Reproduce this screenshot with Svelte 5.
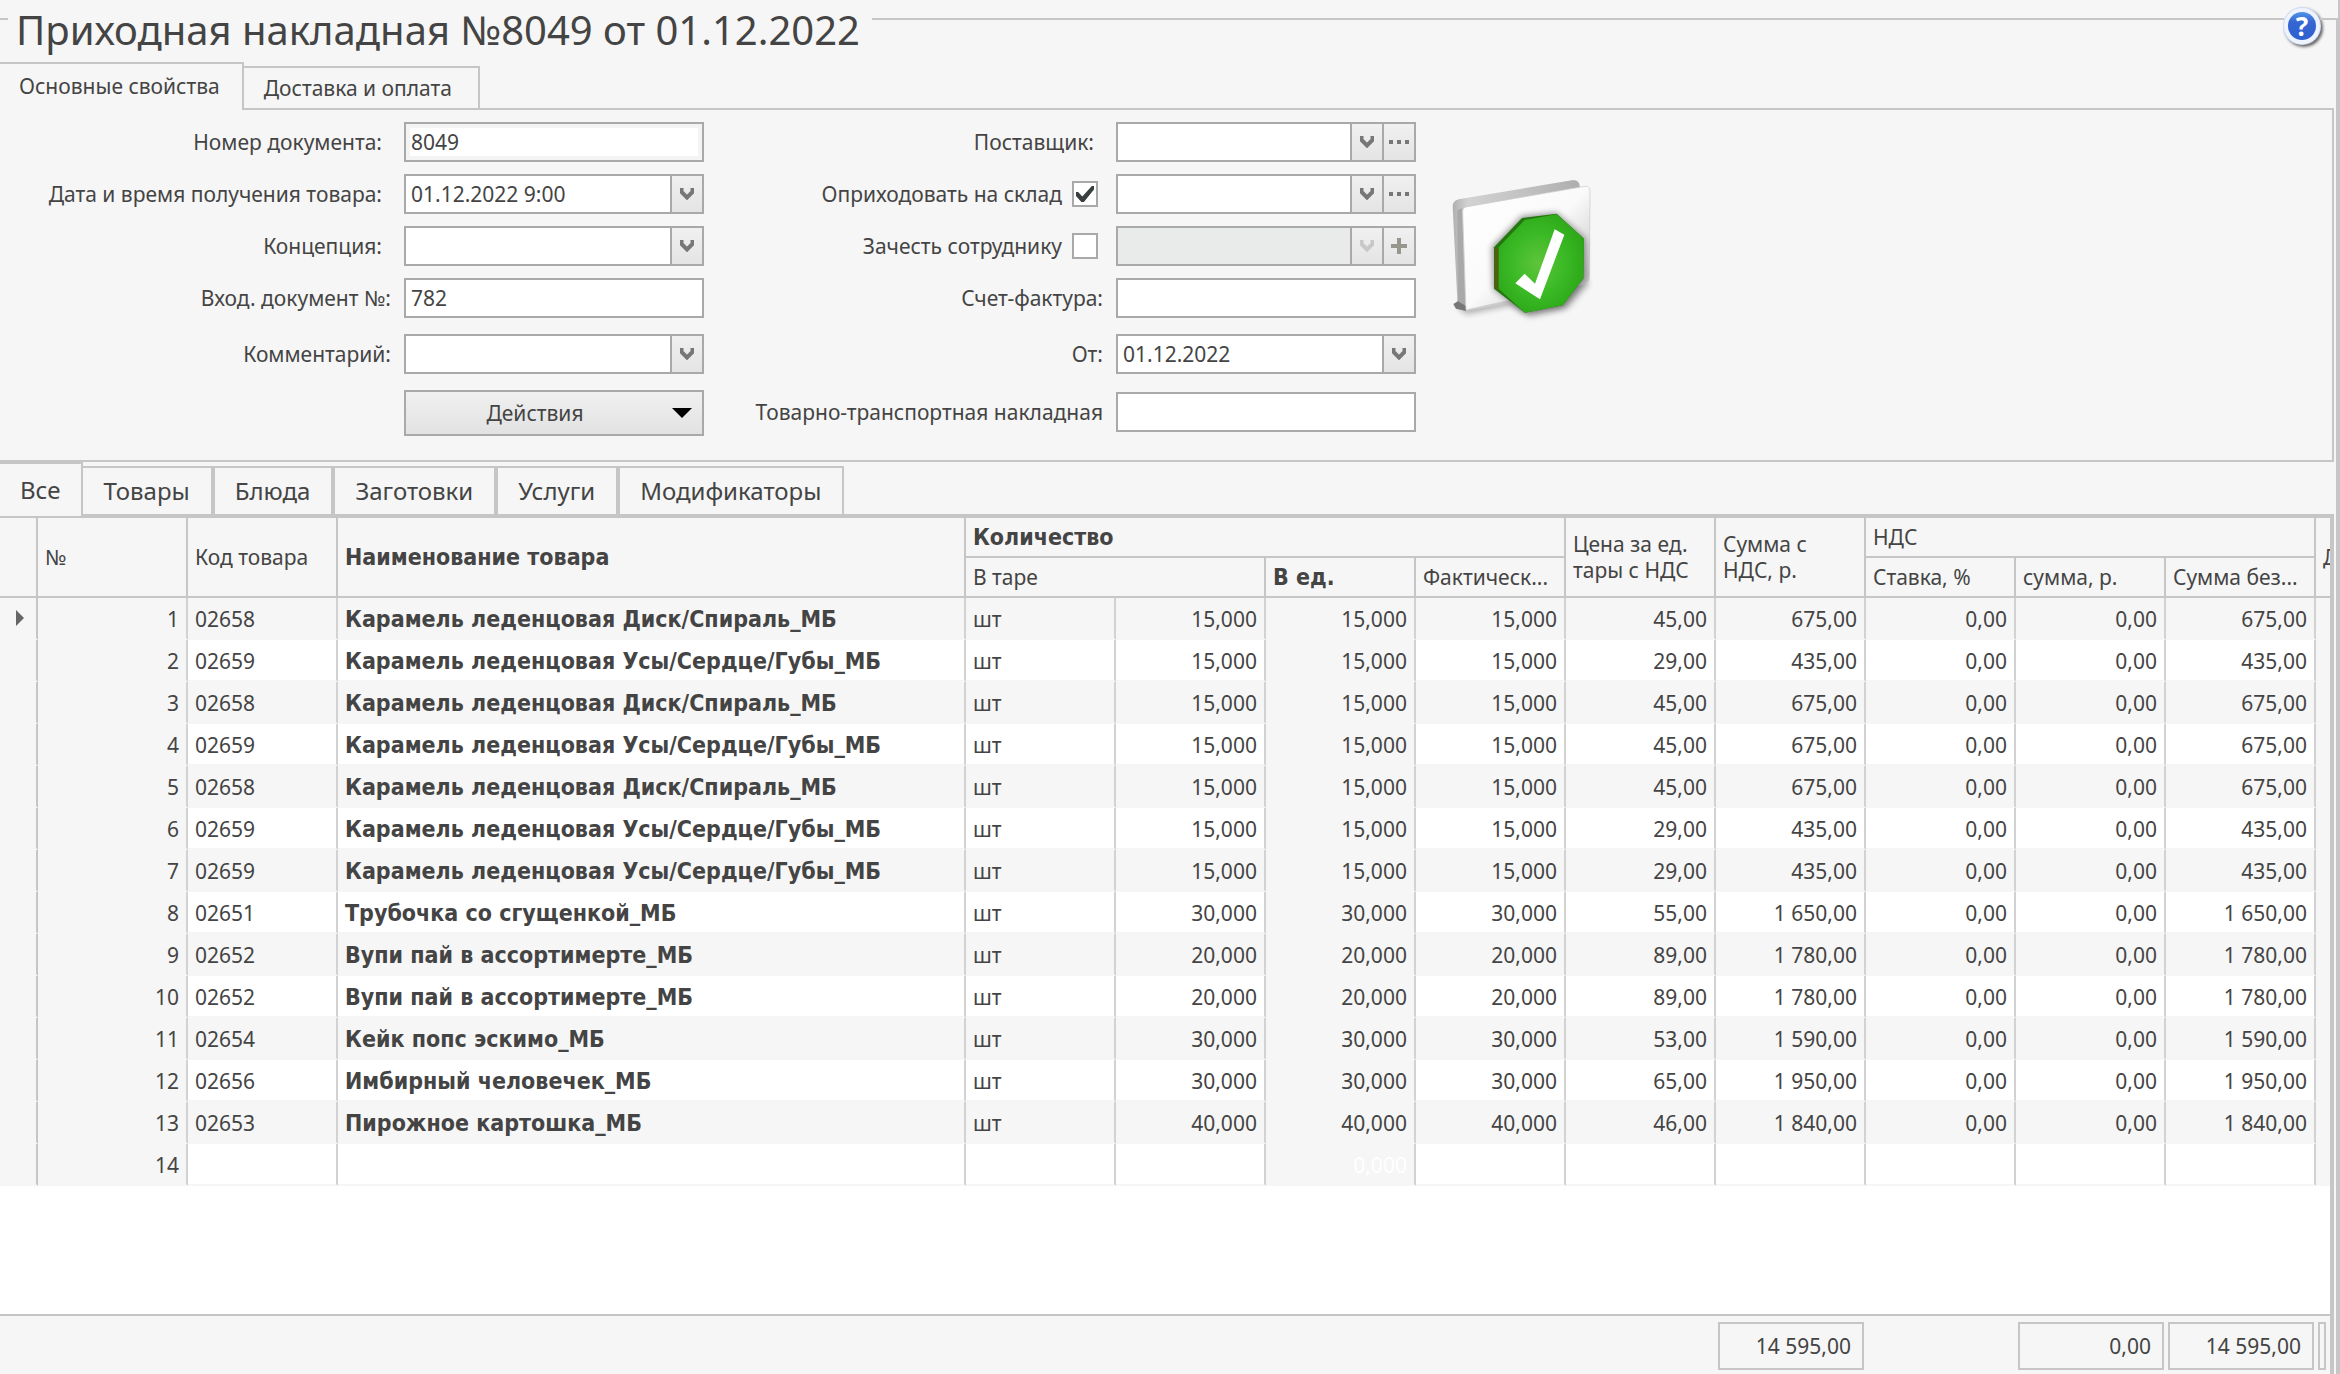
<script>
  const mainTabs = ['Основные свойства', 'Доставка и оплата'];
  const goodsTabs = ['Все', 'Товары', 'Блюда', 'Заготовки', 'Услуги', 'Модификаторы'];

  let activeMain = $state(0);
  let activeGoods = $state(0);

  const disk = 'Карамель леденцовая Диск/Спираль_МБ';
  const lips = 'Карамель леденцовая Усы/Сердце/Губы_МБ';
  const pie = 'Вупи пай в ассортимерте_МБ';

  const rows = [
    ['02658', disk, '15,000', '45,00', '675,00'],
    ['02659', lips, '15,000', '29,00', '435,00'],
    ['02658', disk, '15,000', '45,00', '675,00'],
    ['02659', lips, '15,000', '45,00', '675,00'],
    ['02658', disk, '15,000', '45,00', '675,00'],
    ['02659', lips, '15,000', '29,00', '435,00'],
    ['02659', lips, '15,000', '29,00', '435,00'],
    ['02651', 'Трубочка со сгущенкой_МБ', '30,000', '55,00', '1 650,00'],
    ['02652', pie, '20,000', '89,00', '1 780,00'],
    ['02652', pie, '20,000', '89,00', '1 780,00'],
    ['02654', 'Кейк попс эскимо_МБ', '30,000', '53,00', '1 590,00'],
    ['02656', 'Имбирный человечек_МБ', '30,000', '65,00', '1 950,00'],
    ['02653', 'Пирожное картошка_МБ', '40,000', '46,00', '1 840,00']
  ];
</script>

{#snippet chevron()}
  <svg class="glyph" viewBox="0 0 14 12" aria-hidden="true"><path d="M1.500 0v4L7 9.500l5.500-5.500V0" /></svg>
{/snippet}

{#snippet dots()}
  <svg class="dots" viewBox="0 0 20 4" aria-hidden="true"><path d="M0 0h4v4H0zM8 0h4v4H8zM16 0h4v4h-4z" /></svg>
{/snippet}

<div class="page">
  <header class="head">
    <span class="rule short"></span>
    <h1>Приходная накладная №8049 от 01.12.2022</h1>
    <span class="rule grow"></span>
    <button class="help" aria-label="Справка"><span>?</span></button>
    <span class="rule end"></span>
  </header>

  <div class="body">
    <div class="tabs main-tabs" role="tablist">
      {#each mainTabs as name, i}
        <button role="tab" aria-selected={activeMain === i} class:active={activeMain === i} onclick={() => (activeMain = i)}>{name}</button>
      {/each}
      <span class="rest"></span>
    </div>

    <form class="form">
      <div class="column left">
        <div class="row">
          <label class="inset" for="num">Номер документа:</label>
          <div class="box focused"><input id="num" value="8049" /></div>
        </div>
        <div class="row">
          <label class="inset" for="received">Дата и время получения товара:</label>
          <div class="box"><input id="received" value="01.12.2022 9:00" /><button type="button" class="side" aria-label="Календарь">{@render chevron()}</button></div>
        </div>
        <div class="row">
          <label class="inset" for="concept">Концепция:</label>
          <div class="box combo"><select id="concept"><option></option></select><span class="side">{@render chevron()}</span></div>
        </div>
        <div class="row">
          <label for="incoming">Вход. документ №:</label>
          <div class="box"><input id="incoming" value="782" /></div>
        </div>
        <div class="row spaced">
          <label for="comment">Комментарий:</label>
          <div class="box combo"><select id="comment"><option></option></select><span class="side">{@render chevron()}</span></div>
        </div>
        <div class="row spaced action-row">
          <button type="button" class="actions">
            <span>Действия</span>
            <svg viewBox="0 0 20 10" aria-hidden="true"><path d="M0 0h20L10 10z" /></svg>
          </button>
        </div>
      </div>

      <div class="column right">
        <div class="row">
          <label class="inset" for="supplier">Поставщик:</label>
          <div class="box combo"><select id="supplier"><option></option></select><span class="side">{@render chevron()}</span><button type="button" class="side" aria-label="Выбрать поставщика">{@render dots()}</button></div>
        </div>
        <div class="row">
          <label class="check">Оприходовать на склад <input type="checkbox" checked /></label>
          <div class="box combo"><select aria-label="Склад"><option></option></select><span class="side">{@render chevron()}</span><button type="button" class="side" aria-label="Выбрать склад">{@render dots()}</button></div>
        </div>
        <div class="row">
          <label class="check">Зачесть сотруднику <input type="checkbox" /></label>
          <div class="box combo off"><select aria-label="Сотрудник" disabled><option></option></select><span class="side">{@render chevron()}</span><button type="button" class="side" aria-label="Добавить сотрудника"><svg class="plus" viewBox="0 0 16 16" aria-hidden="true"><path d="M6 0h4v6h6v4h-6v6H6v-6H0V6h6z" /></svg></button></div>
        </div>
        <div class="row">
          <label for="invoice">Счет-фактура:</label>
          <div class="box"><input id="invoice" /></div>
        </div>
        <div class="row spaced">
          <label for="from">От:</label>
          <div class="box"><input id="from" value="01.12.2022" /><button type="button" class="side" aria-label="Календарь">{@render chevron()}</button></div>
        </div>
        <div class="row spaced">
          <label for="waybill">Товарно-транспортная накладная</label>
          <div class="box"><input id="waybill" /></div>
        </div>
      </div>

      <svg class="status" viewBox="0 0 540 510" role="img" aria-label="Документ проведен">
        <defs>
          <linearGradient id="cover" x1="0" y1="0" x2="1" y2="1">
            <stop offset="0" stop-color="#fff" /><stop offset=".5" stop-color="#fafafa" /><stop offset="1" stop-color="#b4b4b4" />
          </linearGradient>
          <linearGradient id="back" x1="0" y1="0" x2="1" y2="0">
            <stop offset="0" stop-color="#b0b0b0" /><stop offset=".12" stop-color="#d2d2d2" /><stop offset=".5" stop-color="#c4c4c4" /><stop offset="1" stop-color="#aeaeae" />
          </linearGradient>
          <radialGradient id="leaf" cx=".46" cy=".5" r=".6">
            <stop offset="0" stop-color="#5fc43c" /><stop offset=".5" stop-color="#3cba26" /><stop offset="1" stop-color="#2aa516" />
          </radialGradient>
          <filter id="soft" x="-30%" y="-30%" width="160%" height="160%"><feGaussianBlur stdDeviation="9" /></filter>
        </defs>
        <path d="M80 440L110 462L240 436L300 470L410 446L478 370L440 340z" fill="#000" opacity=".3" filter="url(#soft)" />
        <path d="M68 140Q68 122 86 118L430 60Q449 60 449 80L440 400L108 452L76 440L82 420z" fill="url(#back)" />
        <path d="M82 150L96 145L106 446L84 436z" fill="#a9a9a9" />
        <path d="M70 432L84 424L108 438L108 453L78 446z" fill="#777" />
        <path d="M98 154Q98 142 112 140L465 79Q480 78 480 92L478 350Q478 366 464 372L108 450z" fill="url(#cover)" stroke="#c8c8c8" stroke-width="2" />
        <path d="M186 260L276 168L380 158L466 236L466 356L398 440L285 458L190 386z" fill="#000" opacity=".42" filter="url(#soft)" />
        <path d="M192 262L276 174L380 161L462 236L460 355L398 436L285 458L192 386z" fill="#23780d" />
        <path d="M192 266L206 262L206 392L192 384z" fill="#4b6310" />
        <path d="M206 262L284 180L380 163L462 236L460 355L398 436L285 458L206 386z" fill="url(#leaf)" />
        <path d="M256 370L284 341L315 371L374 208L403 224L330 418z" fill="#fff" />
      </svg>
    </form>

    <div class="tabs goods-tabs" role="tablist">
      {#each goodsTabs as name, i}
        <button role="tab" aria-selected={activeGoods === i} class:active={activeGoods === i} onclick={() => (activeGoods = i)}>{name}</button>
      {/each}
      <span class="rest"></span>
    </div>

    <div class="grid">
      <table>
        <colgroup>
          <col class="c-mark" /><col class="c-num" /><col class="c-num" /><col />
          {#each Array(9) as _}<col class="c-num" />{/each}
          <col class="c-tail" />
        </colgroup>
        <thead>
          <tr>
            <th rowspan="2"></th>
            <th rowspan="2">№</th>
            <th rowspan="2">Код товара</th>
            <th rowspan="2" class="bold">Наименование товара</th>
            <th colspan="4" class="bold">Количество</th>
            <th rowspan="2" class="wrap">Цена за ед. тары с НДС</th>
            <th rowspan="2" class="wrap">Сумма с НДС, р.</th>
            <th colspan="3">НДС</th>
            <th rowspan="2" class="tail">Д</th>
          </tr>
          <tr>
            <th colspan="2">В таре</th>
            <th class="bold">В ед.</th>
            <th>Фактическ...</th>
            <th>Ставка, %</th>
            <th>сумма, р.</th>
            <th>Сумма без...</th>
          </tr>
        </thead>
        <tbody>
          {#each rows as [code, name, qty, price, sum], i}
            <tr>
              <td class="mark">{#if i === 0}<svg viewBox="0 0 8 16" aria-hidden="true"><path d="M0 0L8 8L0 16z" /></svg>{/if}</td>
              <td class="n fixed">{i + 1}</td>
              <td>{code}</td>
              <td class="bold">{name}</td>
              <td>шт</td>
              <td class="n">{qty}</td>
              <td class="n fixed">{qty}</td>
              <td class="n">{qty}</td>
              <td class="n">{price}</td>
              <td class="n">{sum}</td>
              <td class="n">0,00</td>
              <td class="n">0,00</td>
              <td class="n">{sum}</td>
              <td class="tail"></td>
            </tr>
          {/each}
          <tr>
            <td class="mark"></td>
            <td class="n fixed">{rows.length + 1}</td>
            <td></td><td></td><td></td><td></td>
            <td class="n fixed ghost">0,000</td>
            <td></td><td></td><td></td><td></td><td></td><td></td>
            <td class="tail"></td>
          </tr>
        </tbody>
      </table>
    </div>

    <footer class="totals">
      <output class="sum">14 595,00</output>
      <output class="vat">0,00</output>
      <output>14 595,00</output>
      <output class="stub"></output>
    </footer>
  </div>
</div>

<style>
  :global(body) {
    margin: 0;
    background: #f6f6f6;
  }
  .page {
    --line: #c6c6c6;
    --edge: #a9a9a9;
    box-sizing: border-box;
    min-height: 100vh;
    display: flex;
    flex-direction: column;
    border-right: 2px solid var(--line);
    background: #f6f6f6;
    color: #444;
    font: 21px/26px 'Noto Sans', 'Open Sans', sans-serif;
  }
  .page *, .page *::before {
    box-sizing: border-box;
  }
  button, input, select {
    margin: 0;
    padding: 0;
    border: 0;
    border-radius: 0;
    background: none;
    color: inherit;
    font: inherit;
  }

  .head {
    display: flex;
    height: 62px;
  }
  h1 {
    margin: 0;
    padding: 0 12px 0 8px;
    font-size: 40px;
    line-height: 60px;
    font-weight: 400;
    white-space: nowrap;
  }
  .rule {
    margin-top: 18px;
    border-top: 2px solid var(--line);
  }
  .short { width: 8px; }
  .grow { flex: 1; }
  .end {
    width: 18px;
    border-right: 2px solid var(--line);
  }
  .help {
    width: 36px;
    height: 36px;
    margin-top: 8px;
    padding: 4px;
    border-radius: 50%;
    background: #eef3fd;
    box-shadow: 0 0 0 1px #cfdcf3, 2px 2px 3px 1px #666;
  }
  .help span {
    display: block;
    border-radius: 50%;
    background: linear-gradient(#4f95ea, #3566d2 35%, #2f5fd0);
    color: #fff;
    font-size: 26px;
    line-height: 28px;
    font-weight: 700;
  }

  .body {
    flex: 1;
    display: flex;
    flex-direction: column;
    padding-right: 2px;
    border-right: 2px solid var(--line);
  }
  .tabs {
    display: flex;
    align-items: flex-end;
  }
  .rest {
    flex: 1;
  }
  .main-tabs button {
    height: 44px;
    padding: 0 26px 0 20px;
    border: solid var(--line);
    border-width: 2px 2px 2px 0;
  }
  .main-tabs button.active {
    height: 48px;
    padding: 0 22px 2px 19px;
    border-bottom: 0;
  }
  .main-tabs .rest {
    border-bottom: 2px solid var(--line);
  }

  .form {
    display: flex;
    padding: 12px 0 24px;
    border: solid var(--line);
    border-width: 0 2px 2px 0;
  }
  .left { width: 704px; }
  .right { width: 712px; }
  .row {
    display: flex;
    justify-content: flex-end;
    align-items: center;
    margin-bottom: 12px;
  }
  .row.spaced { margin-top: 16px; }
  .row.spaced, .row:has(+ .spaced) { margin-bottom: 0; }
  .right .row.spaced:last-child { margin-top: 18px; }
  label {
    padding-right: 13px;
    white-space: nowrap;
  }
  label.inset { padding-right: 22px; }
  label.check {
    display: flex;
    align-items: center;
    gap: 10px;
    padding-right: 18px;
  }
  input[type='checkbox'] {
    appearance: none;
    display: grid;
    place-items: center;
    width: 26px;
    height: 26px;
    border: 2px solid var(--edge);
    background: #fff;
  }
  input[type='checkbox']:checked::before {
    content: '';
    width: 18px;
    height: 16px;
    background: #37403f;
    clip-path: polygon(0 38%, 12% 38%, 35% 66%, 88% 0, 100% 0, 100% 22%, 44% 100%, 30% 100%, 0 62%);
  }
  .box {
    display: flex;
    width: 300px;
    height: 40px;
    border: 2px solid var(--edge);
    background: #fff;
  }
  .box.focused {
    box-shadow: inset 0 0 0 4px #f4f4f4;
  }
  .box input, .box select {
    flex: 1;
    min-width: 0;
    padding: 0 5px;
    appearance: none;
  }
  .side {
    display: grid;
    place-items: center;
    width: 32px;
    border-left: 2px solid var(--edge);
    background: linear-gradient(#f0f0f0, #e4e4e4);
  }
  .glyph {
    width: 14px;
    height: 12px;
    fill: none;
    stroke: #777;
    stroke-width: 4;
  }
  .dots {
    width: 20px;
    height: 4px;
    fill: #777;
  }
  .plus {
    width: 16px;
    height: 16px;
    fill: #96968c;
  }
  .off { background: #e9ebea; }
  .off .glyph { stroke: #c8c8c8; }
  .actions {
    display: flex;
    align-items: center;
    width: 300px;
    height: 46px;
    padding-right: 10px;
    border: 2px solid var(--edge);
    background: linear-gradient(#f0f0f0, #e2e2e2);
  }
  .actions span {
    flex: 1;
    padding-right: 8px;
  }
  .actions svg {
    width: 20px;
    height: 10px;
  }
  .status {
    width: 180px;
    height: 170px;
    margin: 38px 0 0 14px;
  }

  .goods-tabs {
    font-size: 24px;
    line-height: 30px;
  }
  .goods-tabs button {
    height: 52px;
    padding: 0 21px 0 20px;
    border: 2px solid var(--line);
    border-bottom-width: 4px;
  }
  .goods-tabs button.active {
    height: 56px;
    border-width: 2px 2px 2px 0;
  }
  .goods-tabs button.active + button { border-left: 0; }
  .goods-tabs .rest { border-bottom: 4px solid var(--line); }

  .grid {
    flex: 1;
    border-right: 4px solid var(--line);
    background: #fff;
  }
  table {
    width: 100%;
    table-layout: fixed;
    border-collapse: separate;
    border-spacing: 0;
  }
  .c-mark { width: 38px; }
  .c-num { width: 150px; }
  .c-tail { width: 14px; }
  th, td {
    height: 42px;
    padding: 0 4px 0 7px;
    border: solid #d2d2d2;
    border-width: 0 2px 0 0;
    overflow: hidden;
    white-space: nowrap;
    text-align: left;
    font-weight: 400;
  }
  th {
    height: 40px;
    border: solid var(--line);
    border-width: 0 2px 2px 0;
    background: #f6f6f6;
  }
  .wrap { white-space: normal; }
  .bold {
    font-family: 'DejaVu Sans Condensed', 'DejaVu Sans', sans-serif;
    font-size: 23px;
    font-weight: 700;
  }
  td { border-bottom: 2px solid #f6f6f6; padding-top: 1px; }
  tbody tr:nth-child(odd) td { background: #f6f6f6; }
  tbody .n {
    padding-right: 7px;
    text-align: right;
  }
  tbody td.fixed, tbody td.mark, tbody td.tail { background: #f6f6f6; }
  td.mark {
    padding: 0 0 0 16px;
    border-right-color: var(--line);
  }
  .mark svg {
    display: block;
    width: 8px;
    height: 16px;
    fill: #666;
  }
  .ghost { color: #fff; }
  .tail {
    padding-right: 0;
    border-right: 0;
  }

  .totals {
    display: grid;
    grid-template-columns: 1fr 150px 150px 150px 150px 12px;
    padding: 6px 2px 4px 0;
    border: solid var(--line);
    border-width: 2px 4px 0 0;
  }
  output {
    height: 48px;
    margin: 0 2px;
    padding-right: 11px;
    border: 2px solid var(--line);
    line-height: 44px;
    text-align: right;
  }
  .sum { grid-column: 2; }
  .vat { grid-column: 4; }
  .stub { padding: 0; }
</style>
